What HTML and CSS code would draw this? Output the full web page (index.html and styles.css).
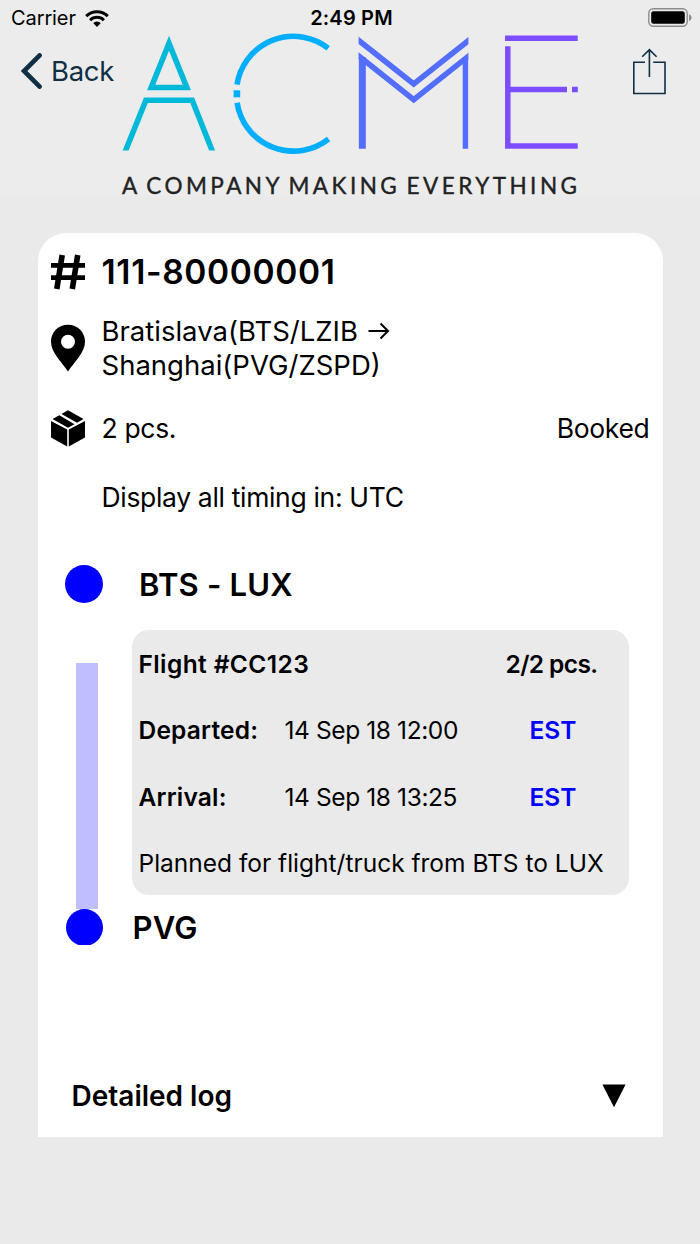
FILE: index.html
```html
<!DOCTYPE html>
<html lang="en">
<head>
    <meta charset="UTF-8">
    <meta name="viewport" content="width=device-width, initial-scale=1.0">
    <title>111-80000001</title>
    <link rel="stylesheet" href="styles.css">
</head>
<body>
    <header class="header">
        <!-- status bar -->
        <div class="status">
            <div class="status_left">
                <span class="carrier">Carrier</span>
                <svg class="wifi" width="24" height="17" viewBox="0 0 24 17">
                    <g fill="none" stroke="#000" stroke-width="3">
                        <path d="M1.2 6.1A15.4 15.4 0 0 1 22.8 6.1"/>
                        <path d="M5.1 10.2A9.8 9.8 0 0 1 18.9 10.2"/>
                    </g>
                    <path d="M8.2 13.1A5.4 5.4 0 0 1 15.8 13.1L12 16.9z"/>
                </svg>
            </div>
            <span class="clock">2:49 PM</span>
            <div class="status_right">
                <svg width="44" height="20" viewBox="0 0 44 20">
                    <rect x="0.8" y="0.8" width="38.4" height="17.4" rx="4.5" fill="none" stroke="#8c8c8c" stroke-width="1.4"/>
                    <rect x="3.2" y="3.2" width="33.6" height="12.6" rx="2.4"/>
                    <path d="M41 6.3a3.4 3.4 0 0 1 0 6.6z" fill="#8c8c8c"/>
                </svg>
            </div>
        </div>
        <!-- navigation -->
        <div class="nav">
            <div class="back">
                <svg width="22" height="36" viewBox="0 0 22 36">
                    <path d="M18.6 2.4L3 18L18.6 33.6" fill="none" stroke="#0f2f44" stroke-width="4.6" stroke-linecap="round"/>
                </svg>
                <span class="back_text">Back</span>
            </div>
            <svg class="logo" width="458" height="162" viewBox="122 34 458 162">
                <clipPath id="clip_a"><rect x="120" y="30" width="100" height="120.5"/></clipPath>
                <clipPath id="clip_m"><rect x="358.6" y="30" width="109.8" height="118.7"/></clipPath>
                <g fill="none" stroke="#00b9d9" stroke-width="5.6" stroke-miterlimit="10" clip-path="url(#clip_a)">
                    <polygon points="169,43.2 151.2,87.5 186.8,87.5"/>
                    <polyline points="123.8,155 145.9,100.2 192.2,100.2 213.9,155"/>
                </g>
                <g fill="none" stroke="#00aeff" stroke-width="5.6">
                    <path d="M237 84.7A57 57 0 0 1 328.2 48.2"/>
                    <path d="M237.1 102.8A57 57 0 0 0 328.6 139"/>
                    <path d="M233.6 93.8h6.6" stroke-width="7"/>
                </g>
                <g fill="none" stroke="#536dfe" stroke-width="5.6" clip-path="url(#clip_m)">
                    <polyline points="353.7,36.4 413.7,84 473.7,36.4"/>
                    <polyline points="353.7,52 413.7,99.6 473.7,52"/>
                    <path d="M362.2 57v93" stroke-width="7.2"/>
                    <path d="M465.5 57v93"/>
                </g>
                <g fill="none" stroke="#7c4dff" stroke-width="5.5">
                    <path d="M505 38.3h72.7"/>
                    <path d="M507.8 46.3v99.6h69.9"/>
                    <path d="M507.8 89.4h59.2M572 89.4h5.8"/>
                </g>
                <text class="tagline" x="122" y="193.6" textLength="457">A COMPANY MAKING EVERYTHING</text>
            </svg>
            <svg class="share" width="36" height="48" viewBox="0 0 36 48">
                <g fill="none" stroke="#0f2f44" stroke-width="1.6">
                    <path d="M13 14.3H1.8v31.2h31.2V14.3H21.2"/>
                    <path d="M17.4 29V1.8M10.2 8.8l7.2-7.2 7.2 7.2"/>
                </g>
            </svg>
        </div>
    </header>

    <main class="card">
        <div class="row row_number">
            <svg class="icon" width="36" height="36" viewBox="0 0 36 36">
                <path d="M12.2 1L6.800 35M27.700 1L22.300 35" fill="none" stroke="#000" stroke-width="5.600"/>
                <path d="M1 11.400h34M1 23.600h34" fill="none" stroke="#000" stroke-width="4.600"/>
            </svg>
            <span class="awb">111-80000001</span>
        </div>
        <div class="row row_route">
            <svg class="icon" width="36" height="48" viewBox="0 0 36 48">
                <path fill-rule="evenodd" d="M18 .7C8.500.7 1 8 1 17.400C1 29 11.500 37 18 47.600C24.500 37 35 29 35 17.400C35 8 27.500.7 18 .7zM18 10.700a7 7 0 1 1 0 14a7 7 0 1 1 0-14z"/>
            </svg>
            <div class="route">
                <div class="route_from">Bratislava(BTS/LZIB
                    <svg width="22" height="18" viewBox="0 0 22 18"><path d="M.5 9h20M12.500 1.500L20 9l-7.500 7.500" fill="none" stroke="#000" stroke-width="2"/></svg>
                </div>
                <div class="route_to">Shanghai(PVG/ZSPD)</div>
            </div>
        </div>
        <div class="row row_pcs">
            <svg class="icon" width="36" height="38" viewBox="0 0 36 38">
                <path d="M1 12L17.200 20.500V37.500L1 28.500zM35 12L18.800 20.500V37.500L35 28.500z"/>
                <path d="M2.500 10L9.300 6.200L24.500 15.300L18 18.800zM11.500 5L18 1.300L33.500 10L27 13.800z"/>
            </svg>
            <span class="pcs">2 pcs.</span>
            <span class="state">Booked</span>
        </div>
        <div class="row row_timing">
            <span class="timing">Display all timing in: UTC</span>
        </div>

        <!-- route timeline -->
        <div class="stop">
            <div class="dot"></div>
            <span class="stop_name">BTS - LUX</span>
        </div>
        <div class="leg">
            <div class="leg_line"></div>
            <div class="flight">
                <div class="flight_row">
                    <b class="flight_no">Flight #CC123</b>
                    <b class="flight_pcs">2/2 pcs.</b>
                </div>
                <div class="flight_row">
                    <b class="label">Departed:</b>
                    <span class="date">14 Sep 18 12:00</span>
                    <b class="est">EST</b>
                </div>
                <div class="flight_row">
                    <b class="label">Arrival:</b>
                    <span class="date">14 Sep 18 13:25</span>
                    <b class="est">EST</b>
                </div>
                <div class="flight_row">
                    <span class="note">Planned for flight/truck from BTS to LUX</span>
                </div>
            </div>
        </div>
        <div class="stop stop_last">
            <div class="dot_last"><div class="dot"></div></div>
            <span class="stop_name">PVG</span>
        </div>

        <div class="log">
            <span class="log_title">Detailed log</span>
            <svg width="24" height="24" viewBox="0 0 24 24"><path d="M.4 .5h23.200L12 23.200z"/></svg>
        </div>
    </main>
</body>
</html>
```
FILE: styles.css
```css
*{
    box-sizing: border-box;
}
body{
    margin: 0;
    height: 1244px;
    background-color: #eaeaea;
    font-family: Inter, "Liberation Sans", sans-serif;
    font-size: 26.5px;
    letter-spacing: -.33px;
    color: #000;
    white-space: nowrap;
}
svg{
    display: block;
    flex-shrink: 0;
}
.header{
    height: 196px;
    background-color: #ececec;
}
.status{
    display: grid;
    grid-template-columns: 1fr auto 1fr;
    align-items: center;
    height: 34px;
    padding: 2px 8px 0 11px;
    font-size: 20px;
    letter-spacing: -.1px;
}
.status_left{
    display: flex;
    align-items: center;
    gap: 9px;
}
.status_right{
    display: flex;
    justify-content: flex-end;
}
.clock{
    font-weight: 600;
    letter-spacing: .2px;
}
.nav{
    display: flex;
    height: 162px;
}
.back{
    display: flex;
    align-items: center;
    gap: 8px;
    width: 122px;
    height: 36px;
    margin-top: 19px;
    padding-left: 21px;
    font-size: 27.5px;
    color: #0f2f44;
}
.logo{
    overflow: visible;
}
.tagline{
    font-family: Lato, sans-serif;
    font-size: 22.5px;
    letter-spacing: 2px;
    word-spacing: -3px;
    fill: #222;
    stroke: #222;
    stroke-width: .4px;
}
.share{
    margin: 14px 0 0 52px;
}
.card{
    height: 904px;
    margin: 37px 37.5px 0;
    background-color: #fff;
    border-radius: 28px 28px 0 0;
}
.row{
    display: flex;
    align-items: center;
    gap: 16px;
    padding: 0 13px 0 12px;
}
.row_number{
    height: 77px;
}
.row_route{
    height: 76px;
}
.row_pcs{
    height: 84px;
}
.row_timing{
    height: 54px;
    padding-left: 64px;
}
.awb{
    font-size: 33.5px;
    font-weight: 600;
    letter-spacing: .65px;
}
.route{
    font-size: 27.5px;
    line-height: 34px;
    letter-spacing: 0;
}
.route_from{
    display: flex;
    align-items: center;
    gap: 10px;
}
.state{
    margin-left: auto;
}
.stop{
    display: flex;
    align-items: center;
    gap: 36px;
    height: 106px;
    padding: 14px 0 0 27.5px;
}
.dot{
    width: 38px;
    height: 38px;
    border-radius: 50%;
    background-color: #00f;
}
.stop_name{
    font-size: 31px;
    font-weight: 600;
    letter-spacing: .2px;
}
.leg{
    display: flex;
    gap: 34px;
    height: 279px;
    padding-left: 38px;
}
.leg_line{
    width: 22px;
    margin-top: 33px;
    background-color: #bfbfff;
}
.flight{
    width: 497px;
    height: 265px;
    padding: 1px 7px 0;
    background-color: #eaeaea;
    border-radius: 17px;
    font-size: 24.5px;
    letter-spacing: 0;
}
.flight b{
    font-weight: 600;
}
.flight_row{
    display: flex;
    align-items: center;
    height: 66.3px;
}
.flight_no{
    letter-spacing: .4px;
}
.flight_pcs{
    margin-left: auto;
    padding-right: 24px;
    letter-spacing: -.6px;
}
.label{
    width: 146px;
    letter-spacing: .2px;
}
.date{
    width: 245px;
    letter-spacing: -.4px;
}
.est{
    color: #00f;
}
.stop_last{
    gap: 30px;
    height: 36px;
    padding-top: 0;
}
/* the last dot is cut flat at the bottom */
.dot_last{
    height: 36px;
    overflow: hidden;
}
.dot_last .dot{
    width: 37px;
    height: 37px;
    margin-left: .5px;
}
.log{
    display: flex;
    align-items: center;
    justify-content: space-between;
    height: 82px;
    margin-top: 110px;
    padding: 0 37px 0 34px;
    font-size: 28px;
    font-weight: 600;
    letter-spacing: 0;
}
```
